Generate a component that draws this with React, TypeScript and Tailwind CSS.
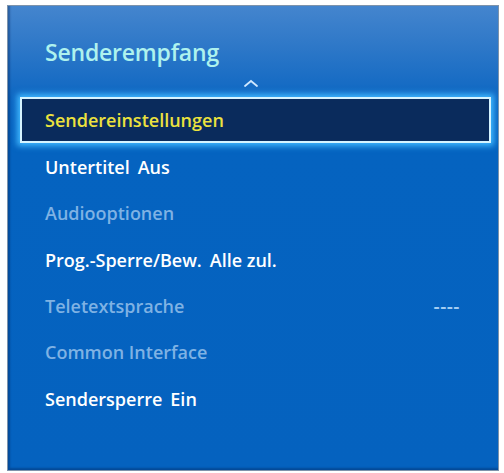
const rows: { label: string; value?: string; dim?: boolean; right?: string }[] = [
  { label: 'Untertitel', value: 'Aus' },
  { label: 'Audiooptionen', dim: true },
  { label: 'Prog.-Sperre/Bew.', value: 'Alle zul.' },
  { label: 'Teletextsprache', dim: true, right: '----' },
  { label: 'Common Interface', dim: true },
  { label: 'Sendersperre', value: 'Ein' },
]

export default function App() {
  return (
    <div
      className="h-[473px] w-[504px] bg-white pl-[7px] pt-[5px]"
      style={{ fontFamily: '"Open Sans", "Noto Sans", sans-serif' }}
    >
      <div className="flex h-[466px] w-[492px] flex-col border border-[#7d93ab] bg-[linear-gradient(180deg,#4485ce_0px,#2e78c8_40px,#0c66c2_95px,#0563c0_140px,#0562bf_100%)] shadow-[inset_2px_-2px_2px_rgba(0,30,80,0.35)]">
        {/* 标题 */}
        <div className="pl-[37px] pt-[30px] text-[23px] leading-[32px] font-semibold tracking-[-0.2px] text-[#aef2ee]">
          Senderempfang
        </div>
        <div className="flex h-[29px] justify-center pr-[4px] pt-[11px]">
          <svg width="16" height="9" viewBox="0 0 16 9">
            <path d="M2 7 L8 2 L14 7" fill="none" stroke="#cfe8ff" strokeWidth="1.8" strokeLinecap="round" />
          </svg>
        </div>

        {/* 选中行 */}
        <div className="ml-[12px] mr-[7px] mt-[0px] flex h-[46px] items-center border-2 border-[#d6f4ff] bg-[#0a2b5c] pl-[23px] shadow-[0_0_6px_3px_#3fb8ff]">
          <span className="text-[18px] font-semibold text-[#ece23e]">Sendereinstellungen</span>
        </div>

        {rows.map((r) => (
          <div key={r.label} className="flex h-[46.3px] items-center pl-[37px] pr-[38px] pt-[3px]">
            <span
              className={
                r.dim
                  ? 'text-[18px] font-semibold text-[#7fb2e4]'
                  : 'text-[18px] font-semibold text-white'
              }
            >
              {r.label}
              {r.value && <span className="ml-[8px]">{r.value}</span>}
            </span>
            {r.right && (
              <span className="ml-auto text-[19px] font-semibold tracking-[0.5px] text-[#a3cdf2]">{r.right}</span>
            )}
          </div>
        ))}
      </div>
    </div>
  )
}
